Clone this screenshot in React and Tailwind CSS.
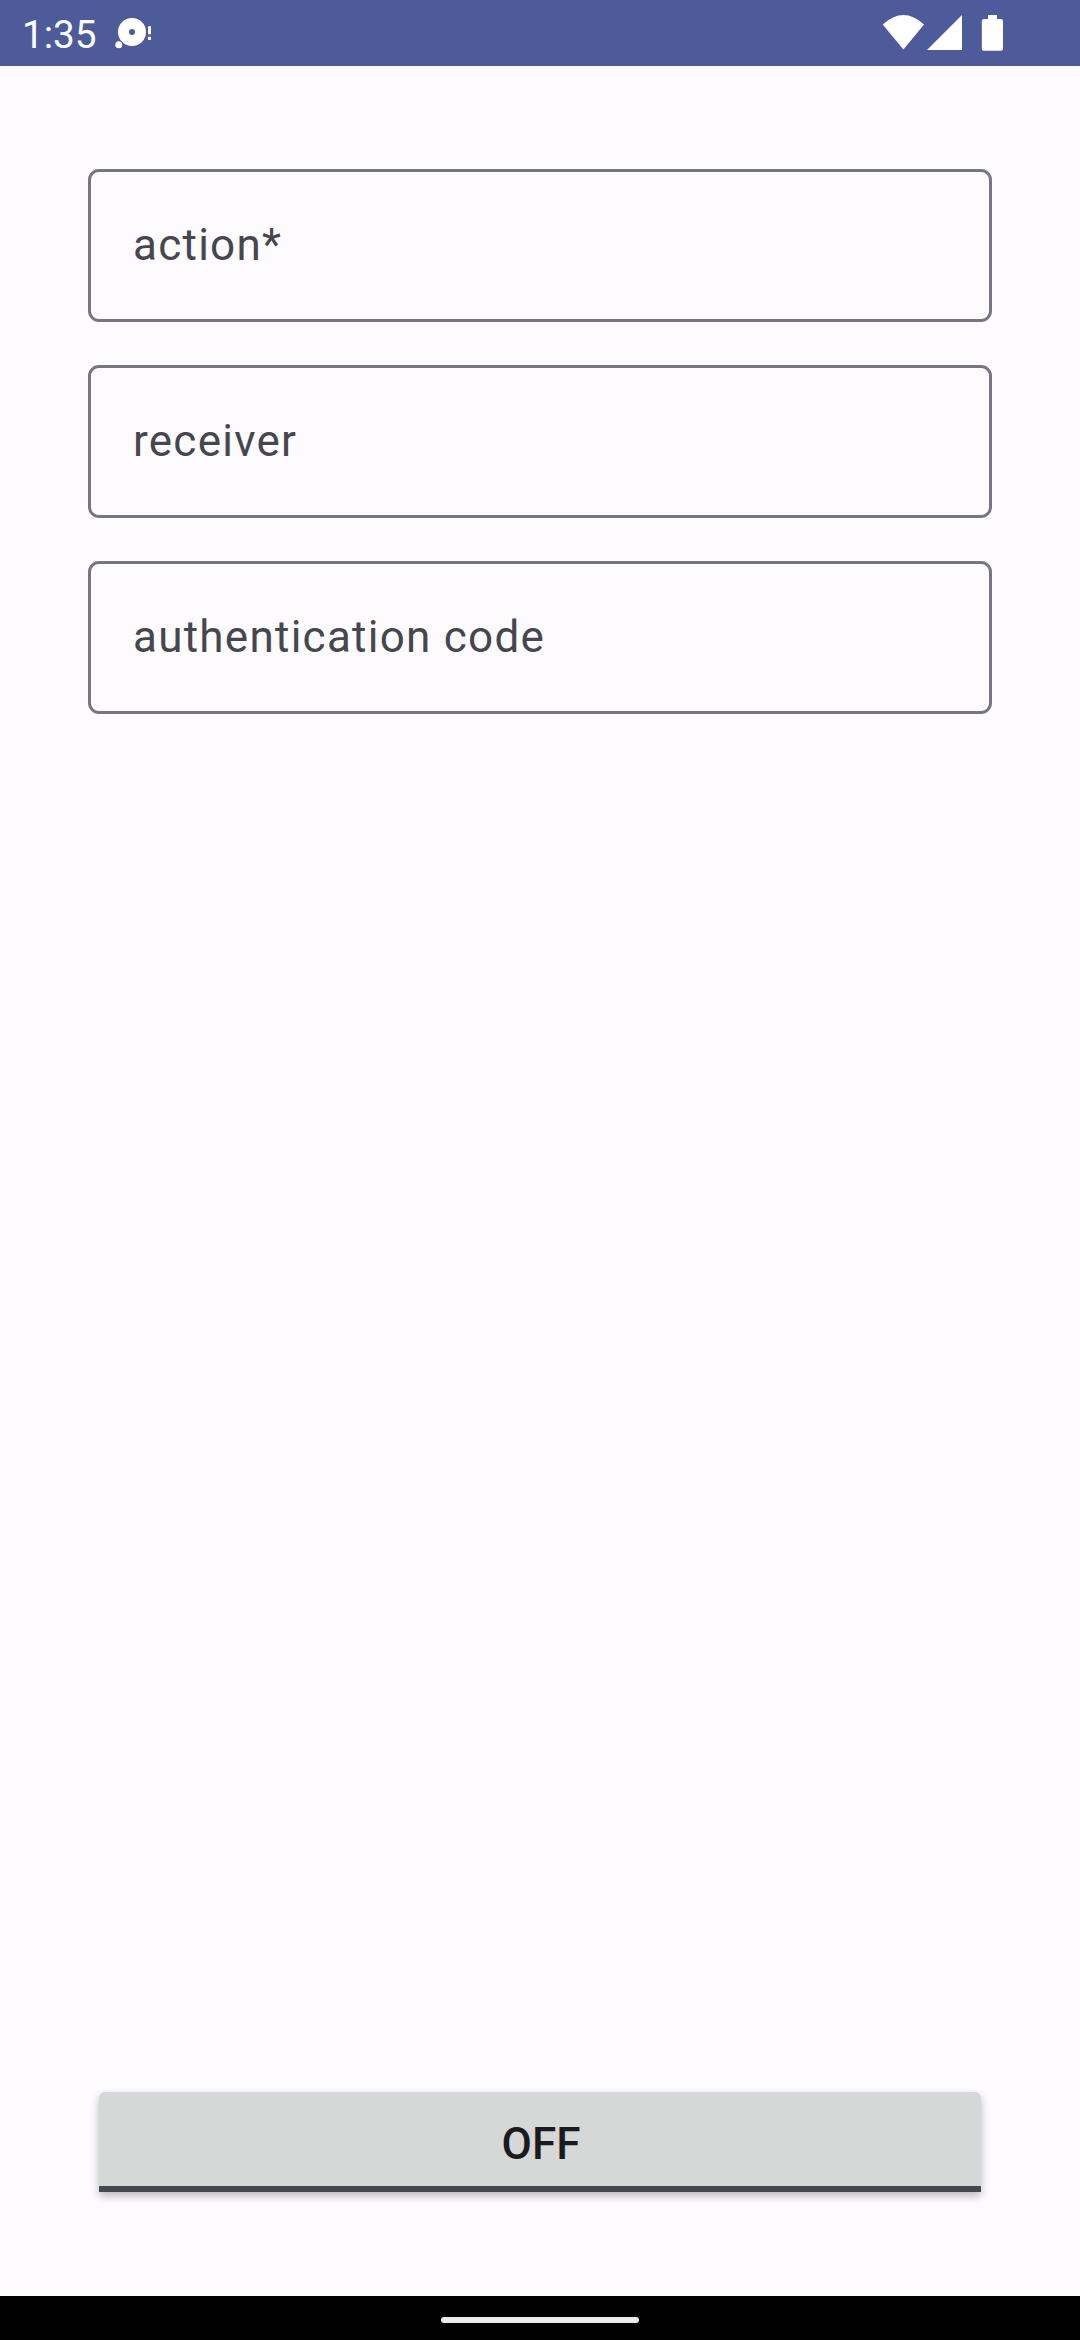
const fields = ["action*", "receiver", "authentication code"];

export default function App() {
  return (
    <div className="flex h-[2340px] w-[1080px] flex-col overflow-hidden bg-[#fefbff] font-[Roboto,sans-serif]">
      <header className="flex h-[66px] shrink-0 items-center bg-[#4d5b9a] text-white">
        <span className="ml-[22px] mt-[3px] w-[78px] text-[38.7px] leading-[45px]">1:35</span>
        <svg className="ml-[14px] h-[66px] w-[40px]" viewBox="114 0 40 66" fill="white">
          <path fillRule="evenodd" d="M132 18a14 14 0 1 0 0 28a14 14 0 1 0 0-28m0 11a3 3 0 1 1 0 6a3 3 0 1 1 0-6" />
          <circle cx="118.800" cy="44.800" r="4.500" fill="#4d5b9a" />
          <circle cx="118.800" cy="44.800" r="3.500" />
          <path d="M148 26.300h3v8h-3zM148 36.800h3v3.200h-3z" />
        </svg>
        <svg className="ml-auto mr-[70px] h-[66px] w-[130px]" viewBox="880 0 130 66" fill="white">
          <path d="M882.700 24.500Q903.400 5.500 924 24.500L903.400 49.500ZM962 15V50H927ZM988 19v-4h9v4h4q2 0 2 2v27.700q0 2-2 2h-17.200q-2 0-2-2V21q0-2 2-2z" />
        </svg>
      </header>
      <main className="flex flex-1 flex-col px-[88px] pt-[103px]">
        <div className="flex flex-col gap-[43px]">
          {fields.map((name) => (
            <div key={name} className="flex h-[153px] items-center rounded-[11px] border-[3px] border-[#767680] px-[42px] pb-px text-[44px] leading-[66px] tracking-[1.26px] text-[#46464f]">{name}</div>
          ))}
        </div>
        <button className="mx-[11px] mb-[104px] mt-auto h-[100px] rounded-t-[6px] border-b-[6px] border-[#46464f] bg-[#d6d8d7] pl-[2px] pt-[10px] text-[44px] font-medium leading-[66px] text-[#1b1b1f] shadow-[0_4px_9px_#0004]">OFF</button>
      </main>
      <footer className="flex h-[44px] shrink-0 items-center justify-center bg-black pt-[4px]">
        <div className="h-[6px] w-[198px] rounded-full bg-[#ebebeb]" />
      </footer>
    </div>
  );
}
